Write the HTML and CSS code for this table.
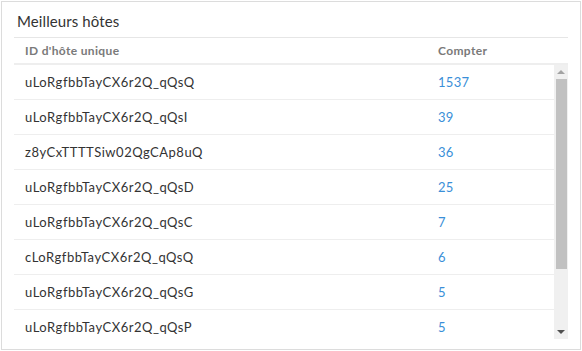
FILE: index.html
```html
<!DOCTYPE html>
<html>
<head>
<meta charset="utf-8">
<link rel="stylesheet" href="styles.css">
</head>
<body>
<div class="card">
  <div class="title">Meilleurs hôtes</div>
  <div class="table">
    <div class="head">
      <div class="c1">ID d'hôte unique</div>
      <div class="c2">Compter</div>
    </div>
    <div class="body">
      <div class="rows">
        <div class="row"><div class="c1">uLoRgfbbTayCX6r2Q_qQsQ</div><div class="c2">1537</div></div>
        <div class="row"><div class="c1">uLoRgfbbTayCX6r2Q_qQsI</div><div class="c2">39</div></div>
        <div class="row"><div class="c1">z8yCxTTTTSiw02QgCAp8uQ</div><div class="c2">36</div></div>
        <div class="row"><div class="c1">uLoRgfbbTayCX6r2Q_qQsD</div><div class="c2">25</div></div>
        <div class="row"><div class="c1">uLoRgfbbTayCX6r2Q_qQsC</div><div class="c2">7</div></div>
        <div class="row"><div class="c1">cLoRgfbbTayCX6r2Q_qQsQ</div><div class="c2">6</div></div>
        <div class="row"><div class="c1">uLoRgfbbTayCX6r2Q_qQsG</div><div class="c2">5</div></div>
        <div class="row"><div class="c1">uLoRgfbbTayCX6r2Q_qQsP</div><div class="c2">5</div></div>
      </div>
      <div class="scrollbar">
        <div class="arrow up"></div>
        <div class="track"><div class="thumb"></div></div>
        <div class="arrow down"></div>
      </div>
    </div>
  </div>
</div>
</body>
</html>
```
FILE: styles.css
```css
html, body {
  margin: 0;
  padding: 0;
  background: #fff;
}
body {
  font-family: Lato, "Open Sans", sans-serif;
  color: #333;
}
.card {
  box-sizing: border-box;
  width: 580px;
  height: 349px;
  margin: 1px 0 0 1px;
  border: 1px solid #dcdcdc;
  padding: 0 12px 0 12px;
  overflow: hidden;
}
.title {
  height: 36px;
  box-sizing: border-box;
  padding: 10px 0 0 3px;
  font-size: 15px;
  letter-spacing: 0.1px;
  color: #333;
  border-bottom: 1px solid #e6e6e6;
}
.head {
  display: flex;
  height: 25px;
  align-items: center;
  border-bottom: 2px solid #eee;
  font-size: 12px;
  font-weight: bold;
  letter-spacing: 0.35px;
  color: #7a7a7a;
}
.c1 {
  padding-left: 11px;
  width: 413px;
}
.c2 {
  flex: 1;
}
.body {
  display: flex;
  height: 274px;
  overflow: hidden;
}
.rows {
  flex: 1;
}
.row {
  display: flex;
  align-items: center;
  height: 33px;
  padding-bottom: 1px;
  border-bottom: 1px solid #eee;
  font-size: 13px;
  letter-spacing: 0.5px;
  color: #333;
}
.row .c2 {
  color: #3a8fd8;
  letter-spacing: 0.3px;
}
.scrollbar {
  width: 14px;
  background: #f0f0f0;
  display: flex;
  flex-direction: column;
  align-items: center;
}
.arrow {
  height: 14px;
  width: 14px;
  display: flex;
  align-items: center;
  justify-content: center;
}
.arrow.up::before {
  content: "";
  border-left: 4px solid transparent;
  border-right: 4px solid transparent;
  border-bottom: 4px solid #a3a3a3;
}
.arrow.down::before {
  content: "";
  border-left: 4px solid transparent;
  border-right: 4px solid transparent;
  border-top: 4px solid #505050;
}
.track {
  flex: 1;
  width: 100%;
  display: flex;
  justify-content: center;
}
.thumb {
  width: 11px;
  height: 190px;
  background: #c1c1c1;
}
```
